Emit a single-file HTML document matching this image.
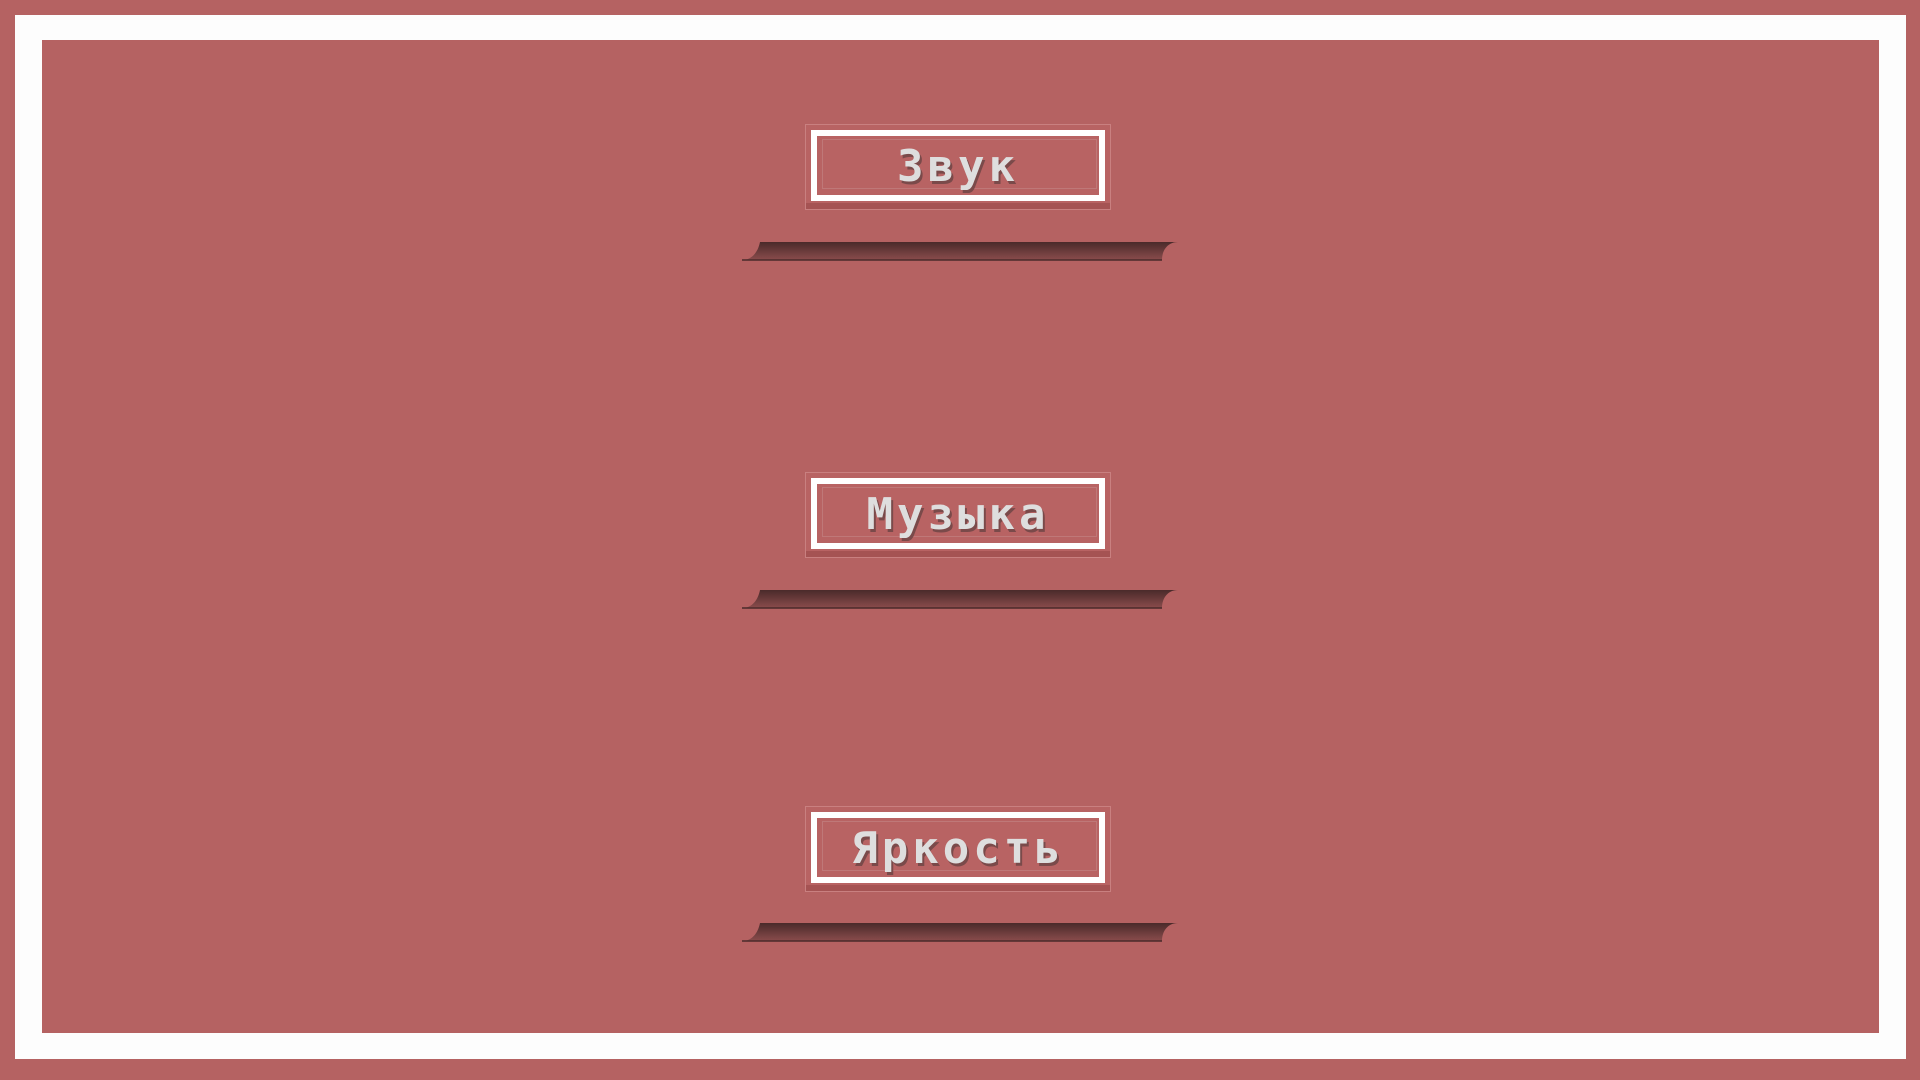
<!DOCTYPE html>
<html><head><meta charset="utf-8"><style>
html,body{margin:0;padding:0;width:1920px;height:1080px;overflow:hidden;background:#b56262;}
.frame{position:absolute;left:15px;top:15px;width:1891px;height:1044px;background:#fdfdfd;}
.inner{position:absolute;left:42px;top:40px;width:1837px;height:993px;background:#b56262;}
.btn{position:absolute;left:805px;width:306px;height:86px;background:#b86363;border:1px solid #c98080;box-sizing:border-box;box-shadow:inset 0 -6px 0 #a55353;}
.btn .w{position:absolute;left:5px;top:5px;width:294px;height:71px;border:6px solid #fff;box-sizing:border-box;}
.btn .w2{position:absolute;left:16px;top:14px;width:275px;height:50px;border:1px solid #bf7878;box-sizing:border-box;}
.btn span{position:absolute;left:0;right:0;top:16px;text-align:center;font-family:"DejaVu Sans Mono","Liberation Mono",monospace;font-weight:bold;font-size:44px;line-height:52px;letter-spacing:4px;color:#dedede;text-shadow:2px 3px 0 #7a4a4a;}
.sl{position:absolute;left:742px;width:436px;height:19px;}
</style></head><body>
<div class="frame"></div>
<div class="inner"></div>

<div class="btn" style="top:124px"><div class="w"></div><div class="w2"></div><span>Звук</span></div>
<svg class="sl" style="top:242px" viewBox="0 0 436 19"><defs><linearGradient id="g" x1="0" y1="0" x2="0" y2="1"><stop offset="0" stop-color="#4a2a2a"/><stop offset="1" stop-color="#8a4c4c"/></linearGradient></defs><path d="M18 0 H436 C426 0 420 8 420 18 H0 C10 18 16 10 18 0Z" fill="url(#g)"/><path d="M0 18 H420" stroke="#4a2a2a" stroke-width="1.5"/></svg>

<div class="btn" style="top:472px"><div class="w"></div><div class="w2"></div><span>Музыка</span></div>
<svg class="sl" style="top:590px" viewBox="0 0 436 19"><path d="M18 0 H436 C426 0 420 8 420 18 H0 C10 18 16 10 18 0Z" fill="url(#g)"/><path d="M0 18 H420" stroke="#4a2a2a" stroke-width="1.5"/></svg>

<div class="btn" style="top:806px"><div class="w"></div><div class="w2"></div><span>Яркость</span></div>
<svg class="sl" style="top:923px" viewBox="0 0 436 19"><path d="M18 0 H436 C426 0 420 8 420 18 H0 C10 18 16 10 18 0Z" fill="url(#g)"/><path d="M0 18 H420" stroke="#4a2a2a" stroke-width="1.5"/></svg>
</body></html>
